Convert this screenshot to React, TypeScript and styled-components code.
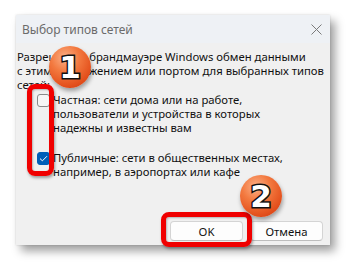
import React from "react";
import styled, { createGlobalStyle } from "styled-components";

const Global = createGlobalStyle`
  html, body { margin: 0; padding: 0; background: #ffffff; }
  body { font-family: "Noto Sans", "Open Sans", sans-serif; }
`;

const Page = styled.div`
  width: 347px;
  height: 263px;
  padding: 15px 0 0 16px;
  box-sizing: border-box;
`;

const Dialog = styled.div`
  position: relative;
  width: 314px;
  height: 230px;
  display: flex;
  flex-direction: column;
  background: #f0f0f0;
  box-shadow: 5px 6px 9px rgba(0, 0, 0, 0.38), 0 0 2px rgba(0, 0, 0, 0.15);
`;

const TitleBar = styled.div`
  height: 28px;
  flex: none;
  display: flex;
  align-items: center;
  justify-content: space-between;
  padding: 0 8px 0 6px;
  background: #eef1f5;
  color: #6b6b6b;
  font-size: 12px;
`;

const Body = styled.div`
  flex: 1;
  display: flex;
  flex-direction: column;
  padding: 7px 7px 4px 1px;
  font-size: 11.3px;
  line-height: 14px;
  color: #111;
`;

const Para = styled.div`
  white-space: nowrap;
`;

const Options = styled.div`
  display: flex;
  flex-direction: column;
  gap: 16px;
  padding-left: 20px;
  margin-top: 1px;
`;

const Option = styled.label`
  display: flex;
  align-items: flex-start;
  gap: 3px;
  white-space: nowrap;
`;

const Box = styled.span<{ $checked?: boolean }>`
  flex: none;
  width: 13px;
  height: 13px;
  margin-top: 1px;
  box-sizing: border-box;
  border-radius: 3px;
  display: flex;
  align-items: center;
  justify-content: center;
  background: ${(p) => (p.$checked ? "#005fb8" : "#f6f6f6")};
  border: 1px solid ${(p) => (p.$checked ? "#005fb8" : "#8a8a8a")};
`;

const Footer = styled.div`
  margin-top: auto;
  display: flex;
  justify-content: flex-end;
  gap: 7px;
`;

const Button = styled.button`
  width: 73px;
  height: 20px;
  padding: 0;
  background: #fdfdfd;
  border: 1px solid #d4d4d4;
  border-bottom-color: #bdbdbd;
  border-radius: 4px;
  font-family: "Noto Sans", "Open Sans", sans-serif;
  font-size: 11.3px;
  color: #111;
`;

const RedFrame = styled.div<{ $l: number; $t: number; $w: number; $h: number }>`
  position: absolute;
  left: ${(p) => p.$l}px;
  top: ${(p) => p.$t}px;
  width: ${(p) => p.$w}px;
  height: ${(p) => p.$h}px;
  box-sizing: border-box;
  border: 5px solid #f00000;
  border-radius: 8px;
  box-shadow: 1px 2px 3px rgba(0, 0, 0, 0.35), inset 1px 1px 2px rgba(0, 0, 0, 0.25);
`;

const Badge = styled.div<{ $l: number; $t: number }>`
  position: absolute;
  left: ${(p) => p.$l}px;
  top: ${(p) => p.$t}px;
  width: 42px;
  height: 42px;
  border-radius: 50%;
  display: flex;
  align-items: center;
  justify-content: center;
  background: radial-gradient(circle at 38% 28%, #fbb088 0%, #f37a40 35%, #e4511d 70%, #c9340c 100%);
  box-shadow: 1px 3px 4px rgba(0, 0, 0, 0.35);
  font-family: "DejaVu Sans", "Liberation Sans", sans-serif;
  font-weight: 700;
  font-size: 31px;
  color: #fff;
  -webkit-text-stroke: 3px #111;
  paint-order: stroke fill;
  line-height: 1;
`;

export default function App() {
  return (
    <>
      <Global />
      <Page>
        <Dialog>
          <TitleBar>
            <span>Выбор типов сетей</span>
            <svg width="11" height="11" viewBox="0 0 11 11">
              <path d="M0.5 0.5 L10.5 10.5 M10.5 0.5 L0.5 10.5" stroke="#7a7a7a" strokeWidth="1" />
            </svg>
          </TitleBar>
          <Body>
            <Para>
              Разрешить в брандмауэре Windows обмен данными
              <br />
              с этим приложением или портом для выбранных типов
              <br />
              сетей:
            </Para>
            <Options>
              <Option>
                <Box />
                <span>
                  Частная: сети дома или на работе,
                  <br />
                  пользователи и устройства в которых
                  <br />
                  надежны и известны вам
                </span>
              </Option>
              <Option>
                <Box $checked>
                  <svg width="9" height="7" viewBox="0 0 9 7">
                    <path d="M1 3.6 L3.4 5.8 L8 1.2" fill="none" stroke="#fff" strokeWidth="1" />
                  </svg>
                </Box>
                <span>
                  Публичные: сети в общественных местах,
                  <br />
                  например, в аэропортах или кафе
                </span>
              </Option>
            </Options>
            <Footer>
              <Button>OK</Button>
              <Button>Отмена</Button>
            </Footer>
          </Body>
          <RedFrame $l={11} $t={69} $w={27} $h={92} />
          <RedFrame $l={145} $t={197} $w={91} $h={35} />
          <Badge $l={33} $t={31}>1</Badge>
          <Badge $l={224} $t={160}>2</Badge>
        </Dialog>
      </Page>
    </>
  );
}
